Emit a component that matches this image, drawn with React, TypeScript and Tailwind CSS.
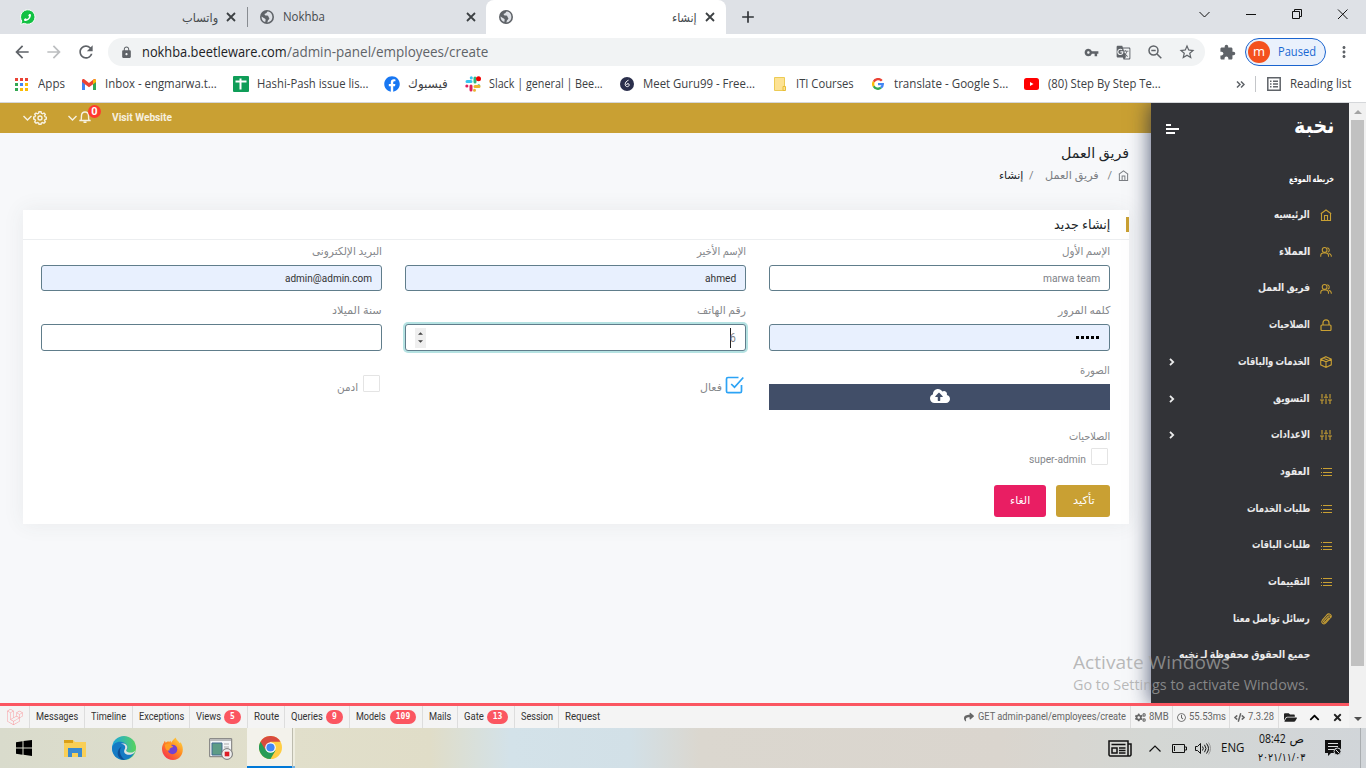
import React, { useLayoutEffect, useRef, useState } from "react";
import {
  MdArrowBack, MdArrowForward, MdRefresh, MdLock, MdVpnKey, MdGTranslate, MdStarBorder,
  MdExtension, MdMoreVert, MdAdd,
} from "react-icons/md";
import {
  FaPhoneAlt, FaFacebook, FaCloudUploadAlt, FaShare, FaCogs, FaRegClock, FaCode,
  FaFolderOpen, FaChevronUp, FaTimes, FaLaravel,
} from "react-icons/fa";

/* One line of text, condensed or stretched to a set width. */
function Fit({ w, rtl, className = "", children }: { w: number; rtl?: boolean; className?: string; children: string }) {
  const ref = useRef<HTMLSpanElement>(null);
  const [scale, setScale] = useState(1);
  useLayoutEffect(() => {
    if (ref.current) setScale(w / ref.current.offsetWidth);
  }, [w, children]);
  return (
    <span dir="ltr" className={`block shrink-0 whitespace-nowrap ${className}`} style={{ width: w }}>
      <span ref={ref} dir={rtl ? "rtl" : "ltr"} className="inline-block origin-left" style={{ transform: `scaleX(${scale})` }}>
        {children}
      </span>
    </span>
  );
}

type P = { className?: string };

const Close = ({ className = "" }: P) => (
  <svg viewBox="0 0 14 14" className={className} fill="none" stroke="#3c4043" strokeWidth="1.800">
    <path d="m3 3 8 8M11 3l-8 8" />
  </svg>
);
const Home = ({ className = "" }: P) => (
  <svg viewBox="0 0 12 12" className={className} fill="none" stroke="currentColor" strokeWidth="1.100">
    <path d="M.8 4.800 6 1l5.200 3.800M1.500 4.500v7h9v-7M4.500 11.500V6.500h3v5" />
  </svg>
);
const Users = ({ className = "" }: P) => (
  <svg viewBox="0 0 13 12" className={className} fill="none" stroke="currentColor" strokeWidth="1.100">
    <circle cx="5" cy="3.800" r="2.600" />
    <path d="M.8 11.200V10c0-1.600 1.200-2.800 2.800-2.800h2.800c1.600 0 2.800 1.200 2.800 2.800v1.200M7.800 1.300a2.600 2.600 0 0 1 .6 5M9.800 7.500c1.600.2 2.500 1.300 2.500 3.700" />
  </svg>
);
const Lock = ({ className = "" }: P) => (
  <svg viewBox="0 0 12 12" className={className} fill="none" stroke="currentColor" strokeWidth="1.200">
    <path d="M2 6h8q1 0 1 1v3.500q0 1-1 1H2q-1 0-1-1V7q0-1 1-1zM3 6V3.800a3 3 0 0 1 6 0V6" />
  </svg>
);
const Box = ({ className = "" }: P) => (
  <svg viewBox="0 0 12 12" className={className} fill="none" stroke="currentColor" strokeWidth="1.100">
    <path d="M6 .7 11.300 3.200v5.600L6 11.400.7 8.800V3.200zM.7 3.200 6 5.800l5.300-2.600M6 5.800v5.600M3.300 2l5.300 2.600" />
  </svg>
);
const Sliders = ({ className = "" }: P) => (
  <svg viewBox="0 0 12 12" className={className} fill="none" stroke="currentColor" strokeWidth="1.100">
    <path d="M2 1v4.500M2 7v4M6 1v3M6 5.500V11M10 1v4.500M10 7v4M0 7h4M4 4.300h4M8 7h4" />
  </svg>
);
const Lines = ({ className = "" }: P) => (
  <svg viewBox="0 0 12 12" className={className} fill="currentColor" shapeRendering="crispEdges">
    <path d="M1 2h1v1H1zM3 2h9v1H3zM1 6h1v1H1zM3 6h9v1H3zM1 9h1v1H1zM3 9h9v1H3z" />
  </svg>
);
const Clip = ({ className = "" }: P) => (
  <svg viewBox="0 0 12 12" className={className} fill="none" stroke="currentColor" strokeWidth="1.100">
    <path d="M9 4.500 5.300 9c-1 1-2.300-.1-1.400-1.200L8 3.300c1.400-1.400 3.200.2 2 1.800L5.800 10c-2 2.200-5.300-.2-3.400-2.800L6.800 2c2.300-2.400 5.400-.1 4.100 2.500" />
  </svg>
);
const Right = ({ className = "" }: P) => (
  <svg viewBox="0 0 6 8" className={className} fill="none" stroke="currentColor" strokeWidth="1.800">
    <path d="m1 .8 3.200 3.200L1 7.200" />
  </svg>
);
const Down = ({ className = "" }: P) => (
  <svg viewBox="0 0 9 6" className={className} fill="none" stroke="currentColor" strokeWidth="1.400">
    <path d="m.5 1 4 4 4-4" />
  </svg>
);
const Gear = ({ className = "" }: P) => (
  <svg viewBox="0 0 14 14" className={className} fill="none" stroke="currentColor" strokeWidth="1.400">
    <path d="M6 .8h2l.4 1.500 1.200.5L11 2l1.300 1.300-.8 1.300.5 1.200 1.300.4v1.900l-1.300.4-.5 1.200.8 1.300L11 12.200l-1.400-.7-1.200.5L8 13.300H6L5.600 12l-1.200-.5-1.400.7L1.700 11l.8-1.300L2 8.500.7 8V6L2 5.700l.5-1.200-.8-1.300L3 2l1.400.8 1.200-.5z" />
    <circle cx="7" cy="7" r="2" />
  </svg>
);
const Bell = ({ className = "" }: P) => (
  <svg viewBox="0 0 12 12" className={className} fill="none" stroke="currentColor" strokeWidth="1.400">
    <path d="M.3 9.500h11.400M2 9.300C2.600 8 2.300 6.500 2.500 4.500 2.700 2.300 4 1 6 1s3.300 1.300 3.500 3.500c.2 2-.1 3.500.5 4.800M4.500 11.300h3" />
  </svg>
);
const Globe = ({ className = "" }: P) => (
  <svg viewBox="0 0 14 14" className={className}>
    <circle cx="7" cy="7" r="7" fill="#5f6368" />
    <path d="M8.200 1.600c-2 .2-1 1.700-2.600 2S4.500 5 5.600 5.500s2.600-.3 2.800 1 1.200 1.200.9 2.300-1.300 1-1.500 2l-.4 1.600c2.800-.1 5-2.300 5-5.300C12.400 4.500 11 2.200 8.200 1.600zM1.600 6.400c-.3 2.900 1.400 5 3.700 5.700-.1-1.400.8-1.900.1-3C4.800 8.300 3 7.500 1.600 6.400z" fill="#dee1e6" />
  </svg>
);

function Tabs() {
  return (
    <div className="flex h-[34px] shrink-0 bg-[#dee1e6] text-xs text-[#45494d]">
      <div className="flex w-[247px] items-center pl-5">
        <svg viewBox="0 0 16 16" className="size-4"><path d="M.7 15.300 1.800 12A7.200 7.200 0 1 1 4.500 14.400z" fill="#12c143" stroke="#fff" /></svg>
        <FaPhoneAlt className="mr-[148px] -ml-[12px] size-[7px] -scale-x-100 text-white" />
        <span className="w-[3px] shrink-0" />
        <Fit w={36} rtl className="mt-px">واتساب</Fit>
        <Close className="ml-[6px] size-[14px]" />
      </div>
      <div className="my-[7px] w-px bg-[#888c91]" />
      <div className="flex w-[238px] items-center pl-3">
        <Globe className="size-[14px]" />
        <Fit w={42} className="ml-[9px]">Nokhba</Fit>
        <Close className="ml-[139px] size-[14px]" />
      </div>
      <div className="flex w-[240px] items-center rounded-t-lg bg-white pl-[13px]">
        <Globe className="size-[14px]" />
        <Fit w={25} rtl className="mt-px ml-[159px]">إنشاء</Fit>
        <Close className="ml-[6px] size-[14px]" />
      </div>
      <MdAdd className="mt-[7px] ml-[12px] size-5 text-[#303438]" />
      <svg viewBox="0 0 150 12" className="mt-[8px] mr-[18px] ml-auto h-[12px] w-[150px]" fill="none" stroke="#111">
        <path d="m1.500 4 5 5 5-5M48 6.500h10M94.500 3.500h7v7h-7zM96.500 3.500v-2h7v7h-2M140 1.500l9.500 9.500M149.500 1.500 140 11" />
      </svg>
    </div>
  );
}

function Toolbar() {
  return (
    <div className="flex h-[36px] shrink-0 items-center bg-white text-[#5f6368]">
      <MdArrowBack className="ml-[12px] size-5" />
      <MdArrowForward className="ml-[12px] size-5 text-[#bcbec0]" />
      <MdRefresh className="ml-[12px] size-[20px]" />
      <div className="ml-[12px] flex h-7 w-[1097px] items-center rounded-full bg-[#f1f3f4] pl-[12px]">
        <MdLock className="mr-[9px] size-[13px]" />
        <Fit w={145} className="text-sm text-[#202124]">nokhba.beetleware.com</Fit>
        <Fit w={201} className="text-sm">/admin-panel/employees/create</Fit>
        <MdVpnKey className="ml-[596px] size-[15px]" />
        <MdGTranslate className="ml-[17px] size-[15px]" />
        <svg viewBox="0 0 14 14" className="ml-[17px] size-[14px]" fill="none" stroke="currentColor" strokeWidth="1.500">
          <circle cx="5.500" cy="5.500" r="4.500" /><path d="m9 9 4.300 4.300M3.300 5.500h4.400" />
        </svg>
        <MdStarBorder className="ml-[16px] size-[18px]" />
      </div>
      <MdExtension className="ml-[14px] size-[17px]" />
      <div className="ml-[9px] flex h-7 w-[81px] items-center rounded-full border border-[#1a64cf] bg-[#eaf1fc] pl-[2px] text-[#1967d2]">
        <span className="flex size-[22px] items-center justify-center rounded-full bg-[#f4511e] pb-0.5 text-[13px] leading-none text-white">m</span>
        <Fit w={38} className="ml-2 text-xs">Paused</Fit>
      </div>
      <MdMoreVert className="ml-[9px] size-[18px]" />
    </div>
  );
}

const appColors = ["bg-[#ea4335]", "bg-[#ea4335]", "bg-[#ea4335]", "bg-[#34a853]", "bg-[#4285f4]", "bg-[#fbbc05]", "bg-[#34a853]", "bg-[#fbbc05]", "bg-[#fbbc05]"];

const bookmarks = [
  { slot: 67, iw: 23, tw: 27, text: "Apps", icon: (
    <div className="grid size-[13px] grid-cols-3 gap-[2px]">{appColors.map((c, i) => <i key={i} className={c} />)}</div>) },
  { slot: 151, iw: 23, tw: 112, text: "Inbox - engmarwa.t...", icon: (
    <svg viewBox="0 0 14 11" className="h-[11px] w-[14px]">
      <path d="M0 1.500V11h3V5z" fill="#4285f4" /><path d="M14 1.500V11h-3V5z" fill="#34a853" />
      <path d="M0 1.500C0 0 1.500-.4 2.600.5L7 4 11.400.5C12.500-.4 14 0 14 1.500V3L7 8.200 0 3z" fill="#ea4335" />
      <path d="M11 1v4.300l3-2.300V1.500C14 0 12.300-.3 11 1z" fill="#fbbc04" />
    </svg>) },
  { slot: 151, iw: 24, tw: 111, text: "Hashi-Pash issue lis...", icon: (
    <svg viewBox="0 0 16 16" className="size-4"><rect width="16" height="16" rx="1" fill="#0f9d58" /><path d="M2.500 5.500h11M7.500 2.500v11" stroke="#fff" strokeWidth="2" /></svg>) },
  { slot: 81, iw: 24, tw: 40, text: "فيسبوك", rtl: true, icon: <FaFacebook className="size-4 text-[#1877f2]" /> },
  { slot: 155, iw: 24, tw: 114, text: "Slack | general | Bee...", icon: (
    <svg viewBox="0 0 16 16" className="size-4" strokeWidth="3" strokeLinecap="round">
      <path d="M2 5.500h4M6.300 1.800v.1" stroke="#36c5f0" /><path d="M10 2v4M13.700 9.700h.1" stroke="#2eb67d" />
      <path d="M10 10.500h4M9.500 14.200v.1" stroke="#ecb22e" /><path d="M6 10v4M1.800 10h.1" stroke="#e01e5a" /><circle cx="13.500" cy="2.800" r="2.500" fill="#f00000" />
    </svg>) },
  { slot: 154, iw: 23, tw: 112, text: "Meet Guru99 - Free...", icon: (
    <svg viewBox="0 0 14 14" className="size-[14px]"><circle cx="7" cy="7" r="7" fill="#2b2f4c" /><path d="M8.500 3.200C6.500 4 5.200 5.500 5.200 7.500c0 2.800 4 2.800 4 .4 0-1.800-2.500-1.700-2.700 0" fill="none" stroke="#fff" /></svg>) },
  { slot: 98, iw: 22, tw: 58, text: "ITI Courses", icon: (
    <svg viewBox="0 0 12 14" className="h-[14px] w-3"><path d="M.5.5h10v13H.5z" fill="#fde293" stroke="#eccb55" /><path d="M9 13.500v-4h2.500v4z" fill="#fde293" stroke="#e8bd36" /></svg>) },
  { slot: 152, iw: 22, tw: 114, text: "translate - Google S...", icon: (
    <svg viewBox="0 0 12 12" className="size-3" fill="none" strokeWidth="2.300">
      <path d="M9.800 2.800A4.850 4.850 0 0 0 1.700 3.800" stroke="#ea4335" /><path d="M1.700 3.800a4.850 4.850 0 0 0 0 4.400" stroke="#fbbc05" />
      <path d="M1.700 8.200a4.850 4.850 0 0 0 7.300 1.500" stroke="#34a853" /><path d="M9 9.700A4.600 4.600 0 0 0 10.800 6.200H6" stroke="#4285f4" />
    </svg>) },
  { slot: 210, iw: 24, tw: 113, text: "(80) Step By Step Te...", icon: (
    <svg viewBox="0 0 15 12" className="h-3 w-[15px]"><rect width="15" height="12" rx="2.500" fill="#f00" /><path d="m6 4 3.500 2L6 8z" fill="#fff" /></svg>) },
];

function Bookmarks() {
  return (
    <div className="flex h-[33px] shrink-0 items-center border-b border-[#d5d7da] bg-white pb-[4px] pl-[15px] text-xs text-[#3c4043]">
      {bookmarks.map((b) => (
        <div key={b.text} className="flex shrink-0 items-center" style={{ width: b.slot }}>
          <span className="shrink-0" style={{ width: b.iw }}>{b.icon}</span>
          <Fit w={b.tw} rtl={b.rtl}>{b.text}</Fit>
        </div>
      ))}
      <svg viewBox="0 0 9 7" className="ml-[2px] h-[7px] w-[9px] shrink-0" fill="none" stroke="#5f6368" strokeWidth="1.500"><path d="m1 .5 3 3-3 3M5 .5l3 3-3 3" /></svg>
      <div className="mr-[11px] ml-[10px] h-4 w-px bg-[#c4c6c9]" />
      <svg viewBox="0 0 14 14" className="mr-[9px] size-[14px] shrink-0" fill="none" stroke="#5f6368" strokeWidth="1.500">
        <path d="M.8.800h12.400v12.400H.800zM3 4.300h1.500M6 4.300h5M3 7h1.500M6 7h5M3 9.700h1.500M6 9.700h5" />
      </svg>
      <Fit w={61}>Reading list</Fit>
    </div>
  );
}

function TopBar() {
  return (
    <div className="flex h-[30px] shrink-0 items-center bg-[#c9a033] pl-[23px] text-white/85">
      <Down className="h-[6px] w-[9px]" />
      <Gear className="mb-px ml-[1px] size-[14px]" />
      <Down className="ml-[21px] h-[6px] w-[9px]" />
      <div className="relative mb-[2px] ml-[2px]">
        <Bell className="size-3" />
        <span className="absolute -top-[6px] left-[9px] flex size-[13px] items-center justify-center rounded-full bg-[#ff3a2f] text-[11px] leading-none font-bold text-white">0</span>
      </div>
      <Fit w={60} className="ml-[21px] text-[11px] font-bold">Visit Website</Fit>
    </div>
  );
}

const Label = ({ w, children }: { w: number; children: string }) => (
  <div className="flex h-[18px] items-center justify-end pt-[2px] text-[#85878b]"><Fit w={w} rtl>{children}</Fit></div>
);

function Field({ label, lw, filled, focus, tall, children }: { label: string; lw: number; filled?: boolean; focus?: boolean; tall?: boolean; children?: React.ReactNode }) {
  return (
    <div className="w-[341px]">
      <Label w={lw}>{label}</Label>
      <div className={`mt-[5px] flex items-center justify-end rounded-[3px] border border-[#607d8b] px-[9px] ${tall ? "h-[27px]" : "h-[26px]"} ${filled ? "bg-[#e8f0fe] text-[#333]" : "bg-white text-[#7d8186]"} ${focus ? "shadow-[0_0_0_2px_#b5e2e2]" : ""}`}>
        {children}
      </div>
    </div>
  );
}

function Card() {
  return (
    <div className="mt-[25px] ml-[23px] h-[314px] w-[1106px] bg-white text-[11px] shadow-[0_0_20px_rgba(60,75,80,0.08)]">
      <div className="flex h-[30px] items-center justify-end border-b border-[#eceef0]">
        <Fit w={56} rtl className="text-[13px] text-[#212529]">إنشاء جديد</Fit>
        <div className="ml-4 h-[15px] w-[3px] bg-[#c9a033]" />
      </div>
      <div className="pr-[19px] pl-[18px]">
        <div className="flex justify-between pt-[2px]">
          <Field label="البريد الإلكترونى" lw={70} filled><Fit w={87} className="pt-px text-[11.5px]">admin@admin.com</Fit></Field>
          <Field label="الإسم الأخير" lw={49} filled><Fit w={31} className="pt-px text-[11.5px]">ahmed</Fit></Field>
          <Field label="الإسم الأول" lw={48}><Fit w={57} className="pt-px text-[11.5px]">marwa team</Fit></Field>
        </div>
        <div className="flex justify-between pt-[10px]">
          <Field label="سنة الميلاد" lw={50} tall />
          <Field label="رقم الهاتف" lw={49} focus tall>
            <div className="mr-auto flex h-5 w-[11px] flex-col items-center justify-center gap-[5px] bg-[#efefef]">
              <svg viewBox="0 0 6 3" className="h-[3px] w-[5px]"><path d="M0 3 3 0l3 3z" fill="#444" /></svg>
              <svg viewBox="0 0 6 3" className="h-[3px] w-[5px]"><path d="m0 0 3 3 3-3z" fill="#444" /></svg>
            </div>
            <div className="-mr-px h-5 w-px bg-[#222]" />
            <Fit w={6} className="text-[12px]">6</Fit>
          </Field>
          <Field label="كلمه المرور" lw={52} filled tall>
            <div className="mr-px flex gap-[2px]">{[0, 1, 2, 3, 4].map((i) => <i key={i} className="size-[3px] bg-black" />)}</div>
          </Field>
        </div>
        <div className="flex justify-between pt-[10px]">
          <div className="flex w-[341px] items-start justify-end pt-[14px] pr-[2px] text-[#85878b]">
            <Fit w={21} rtl className="mt-[5px] mr-[5px]">ادمن</Fit>
            <div className="size-[17px] rounded-[1px] border border-[#e4e4e4]" />
          </div>
          <div className="flex w-[341px] items-start justify-end pt-[14px] pr-[2px] text-[#85878b]">
            <Fit w={22} rtl className="mt-[5px] mr-[3px]">فعال</Fit>
            <svg viewBox="0 0 19 19" className="mt-px size-[19px]" fill="none" stroke="#2ca3f5" strokeWidth="1.700">
              <path d="M13.500 1.500H3Q1.500 1.500 1.500 3v12.200q0 1.500 1.500 1.500h12q1.500 0 1.500-1.500V9" /><path d="m6.200 8 3.300 3.200L18.300 1.500" />
            </svg>
          </div>
          <div className="w-[341px]">
            <Label w={30}>الصورة</Label>
            <div className="mt-[5px] flex h-[26px] items-center justify-center bg-[#414e68] text-white"><FaCloudUploadAlt className="mb-[3px] size-[20px]" /></div>
          </div>
        </div>
        <div className="mt-[17px]"><Label w={41}>الصلاحيات</Label></div>
        <div className="mt-[3px] flex h-[17px] justify-end pr-[2px] text-[#85878b]">
          <Fit w={57} className="mt-[3px] mr-[5px] text-[11.5px]">super-admin</Fit>
          <div className="size-[17px] rounded-[1px] border border-[#e4e4e4]" />
        </div>
        <div className="mt-[20px] flex justify-end gap-[10px] text-white">
          <button className="flex h-8 w-[52px] items-center justify-center rounded-[3px] bg-[#e91e63]"><Fit w={20} rtl>الغاء</Fit></button>
          <button className="flex h-8 w-[54px] items-center justify-center rounded-[3px] bg-[#c9a033]"><Fit w={22} rtl>تأكيد</Fit></button>
        </div>
      </div>
    </div>
  );
}

const menu = [
  { t: "الرئيسيه", w: 36, I: Home },
  { t: "العملاء", w: 31, I: Users },
  { t: "فريق العمل", w: 52, I: Users },
  { t: "الصلاحيات", w: 41, I: Lock },
  { t: "الخدمات والباقات", w: 72, I: Box, sub: true },
  { t: "التسويق", w: 37, I: Sliders, sub: true },
  { t: "الاعدادات", w: 39, I: Sliders, sub: true },
  { t: "العقود", w: 30, I: Lines },
  { t: "طلبات الخدمات", w: 63, I: Lines },
  { t: "طلبات الباقات", w: 58, I: Lines },
  { t: "التقييمات", w: 42, I: Lines },
  { t: "رسائل تواصل معنا", w: 77, I: Clip },
];

function Sidebar() {
  return (
    <div className="z-10 w-[198px] shrink-0 bg-[#323337] text-white shadow-[0_0_20px_rgba(18,30,65,0.75)]">
      <div className="flex h-[46px] items-center justify-between px-[15px]">
        <svg viewBox="0 0 13 10" className="mt-[6px] h-[10px] w-[13px]" fill="#fff"><path d="M0 0h5v2H0zM0 4h13v2H0zM0 8h9v2H0z" /></svg>
        <Fit w={40} rtl className="text-[22px] leading-5 font-bold">نخبة</Fit>
      </div>
      <div className="mt-[21px] mb-[16px] flex h-[20px] items-center justify-end pr-[15px]"><Fit w={45} rtl className="text-[9px] font-bold">خريطه الموقع</Fit></div>
      <div className="-mt-[9px] text-[11px] font-bold text-white/90">
        {menu.map(({ t, w, I, sub }) => (
          <div key={t} className="flex h-[36.7px] items-center justify-end pr-[17px]">
            {sub && <Right className="mr-auto ml-[18px] h-2 w-[6px]" />}
            <Fit w={w} rtl>{t}</Fit>
            <I className="ml-[10px] size-3 text-[#c9a033]" />
          </div>
        ))}
        <div className="flex h-[36.7px] items-center justify-end pr-[39px]"><Fit w={131} rtl>جميع الحقوق محفوظة لـ نخبه</Fit></div>
      </div>
    </div>
  );
}

const debug = [
  { t: "Messages", tw: 42, w: 55 }, { t: "Timeline", tw: 35, w: 48 }, { t: "Exceptions", tw: 45, w: 57 },
  { t: "Views", tw: 25, w: 58, n: "5", nw: 17 }, { t: "Route", tw: 25, w: 37 }, { t: "Queries", tw: 32, w: 65, n: "9", nw: 17 },
  { t: "Models", tw: 30, w: 73, n: "109", nw: 26 }, { t: "Mails", tw: 22, w: 35 }, { t: "Gate", tw: 20, w: 57, n: "13", nw: 21 },
  { t: "Session", tw: 32, w: 44 }, { t: "Request", tw: 35, w: 48 },
];

function DebugBar() {
  return (
    <div className="flex h-[25px] shrink-0 border-t-[3px] border-[#fb5661] bg-[#f4f4f4] text-[10.5px] text-[#333]">
      <div className="flex w-[30px] items-center justify-center border-r border-[#ddd] text-[#f99a9f]"><FaLaravel className="size-4" /></div>
      {debug.map((d) => (
        <div key={d.t} className={`flex items-center pb-px pl-[6px] ${d.t === "Request" ? "" : "border-r border-[#ddd]"}`} style={{ width: d.w }}>
          <Fit w={d.tw}>{d.t}</Fit>
          {d.n && <span className={`flex h-[14px] shrink-0 items-center justify-center rounded-full bg-[#fb5661] font-['DejaVu_Sans_Mono'] text-[8px] font-bold text-white ${d.t === "Models" ? "ml-[4px]" : "ml-[3px]"}`} style={{ width: d.nw }}>{d.n}</span>}
        </div>
      ))}
      <div className="ml-auto flex text-[#666]">
        <div className="flex items-center gap-[4px] border-r border-[#ddd] pr-[4px]"><FaShare className="size-[10px]" /><Fit w={148}>GET admin-panel/employees/create</Fit></div>
        <div className="flex w-[42px] items-center gap-[3px] border-r border-[#ddd] pl-1"><FaCogs className="size-[11px]" /><Fit w={20}>8MB</Fit></div>
        <div className="flex w-[57px] items-center gap-[3px] border-r border-[#ddd] pl-1"><FaRegClock className="size-[9px]" /><Fit w={37}>55.53ms</Fit></div>
        <div className="flex w-[49px] items-center gap-[3px] border-r border-[#ddd] pl-1"><FaCode className="size-[11px]" /><Fit w={26}>7.3.28</Fit></div>
        <div className="flex w-[70px] items-center pl-[5px] text-[#222]">
          <FaFolderOpen className="size-[13px]" /><FaChevronUp className="ml-[12px] size-[11px] text-black" /><FaTimes className="ml-[12px] size-[11px]" />
        </div>
      </div>
    </div>
  );
}

function Taskbar() {
  return (
    <div className="flex h-10 shrink-0 items-center bg-[linear-gradient(90deg,#d9dbcc_0px,#e1dfcb_290px,#e0ddc8_430px,#d3e2e9_510px,#d2e0e7_630px,#dbd7cf_700px,#dad5ce_1000px,#d4d7d4_1150px,#d1d5d9_1366px)] text-[#111]">
      <svg viewBox="0 0 16 16" className="ml-4 size-4"><path d="M0 2.300 6.500 1.300v6.200H0zM7.500 1.100 16 0v7.500H7.500zM0 8.500h6.500v6.200L0 13.700zM7.500 8.500H16V16l-8.500-1.200z" fill="#000" /></svg>
      <svg viewBox="0 0 22 20" className="ml-8 h-[20px] w-[22px]">
        <path d="M0 2h9l2 2h11v15H0z" fill="#f9cf57" /><path d="M0 2h9v3H0z" fill="#dba018" /><path d="M4 19v-9h14v9h-4v-4H8v4z" fill="#3b8ad0" />
      </svg>
      <svg viewBox="0 0 24 24" className="ml-[26px] size-6">
        <defs><linearGradient id="edge" x1="0" x2="1"><stop stopColor="#1ba5df" /><stop offset="1" stopColor="#58d35e" /></linearGradient></defs>
        <circle cx="12" cy="12" r="12" fill="url(#edge)" />
        <path d="M0 12C1 7 6 5 10 6c4 .8 6 3.600 5.500 6.500-.3 1.400-1.500 1.700-1.200 2.800.5 2.200 5.200 2.700 8.200.8C20.500 21 16 24 12 24 5 24 0 19 0 12z" fill="#167bc4" />
        <path d="M24 13c-1 3-4 4-7 3.500-2.500-.5-3.300-1.500-2.500-2.700 1.500-2 1-4.800-1.500-6-1.500-.6-3-.5-4 0C12 8 14 10 13 12.500c-.8 1.800-1.500 3.500 0 5 2.500 2.300 7.500 1.500 9.500-1z" fill="#dfe4df" />
        <path d="M10 10.500C7 13 7 19.500 13 23.900 5 24 3 14 10 10.500z" fill="#0d4f96" />
      </svg>
      <svg viewBox="0 0 24 24" className="ml-[25px] size-[23px]">
        <defs><linearGradient id="fox" x1="1" y1="0" x2=".2" y2="1"><stop stopColor="#ffe34a" /><stop offset=".5" stopColor="#ff8a1f" /><stop offset="1" stopColor="#f6304f" /></linearGradient></defs>
        <path d="M4 4l1 2c1-1.500 3-1.500 4-1l1-1 .5 2C12 4 13 2 15.500.5c.3 3 3 3.500 4 6l1-1C25 12 23 23.500 12.500 24 3 24-2 13 3 6z" fill="url(#fox)" />
        <circle cx="12" cy="13" r="5" fill="#7243d1" /><path d="M4 8c4-2 7-1 7 1 2 0 2 1.500 0 2-2 1-2.500 1.500-2 3C6 15 4 12 4 8z" fill="#ff9d22" />
      </svg>
      <svg viewBox="0 0 24 23" className="ml-[25px] h-[23px] w-6">
        <path d="M.7 1.700h22v18H.7z" fill="#f4f6f7" stroke="#777" /><path d="M1 2h21v2H1z" fill="#bbb" /><path d="M3 6h10v12H3z" fill="#5d9c86" stroke="#406a91" /><path d="M15 7h5M15 10h5M15 13h5" stroke="#aaa" />
        <circle cx="18" cy="17" r="5.400" fill="#eee" stroke="#777" /><path d="M15.700 14.700h4.600v4.600h-4.600z" fill="#dd1d25" />
      </svg>
      <div className="ml-[14px] flex h-10 w-[45px] items-center justify-center border-b-2 border-[#0078d7] bg-[#f3f2eb] pl-[2px]">
        <svg viewBox="0 0 24 24" className="size-[23px]">
          <circle cx="12" cy="12" r="12" fill="#ffcd42" />
          <path d="M12 12 1.600 6A12 12 0 0 0 12 24l5.200-9z" fill="#279c57" /><path d="M1.600 6A12 12 0 0 1 22.400 6H12l-5.500 8z" fill="#d84b3e" />
          <circle cx="12" cy="12" r="5.500" fill="#fff" /><circle cx="12" cy="12" r="4.300" fill="#4286f5" />
        </svg>
      </div>
      <div className="h-10 w-[3px] border-b-2 border-l border-b-[#6fb1e5] border-l-[#bdbcae] bg-[#eeeddf]" />
      <svg viewBox="0 0 24 17" className="-mr-px ml-auto h-[17px] w-6" fill="none" stroke="#111" strokeWidth="1.500">
        <path d="M1 1h19v15H2l-1-1zM20 4h3v11l-1 1h-3M3.500 4.500h14M4 8h5v5H4zM11 8h6.500M11 10.500h6.500M11 13h6.500" />
      </svg>
      <svg viewBox="0 0 12 7" className="ml-[18px] h-[7px] w-3" fill="none" stroke="#111" strokeWidth="1.200"><path d="m.5 6.500 5.500-5.500 5.500 5.500" /></svg>
      <svg viewBox="0 0 15 9" className="ml-[11px] h-[9px] w-[15px]" fill="none" stroke="#111"><path d="M.5.5h12v8H.5zM13 3h1.500v3H13M2.500 2v5" /></svg>
      <svg viewBox="0 0 16 13" className="ml-[8px] h-[13px] w-4" fill="none" stroke="#111"><path d="M.5 4.500h2l3-3v10l-3-3h-2zM7.500 4.500q1.500 2 0 4M9.500 2.800q3 3.700 0 7.400M11.500 1.500q4 5 0 10" /><path d="M13.500.5q4 6 0 12" stroke="#999" /></svg>
      <Fit w={23} className="ml-[10px] text-xs">ENG</Fit>
      <div className="ml-[14px] flex w-[47px] flex-col items-center text-xs leading-[18px]">
        <div className="flex gap-1"><Fit w={27}>08:42</Fit><Fit w={15} rtl>ص</Fit></div>
        <Fit w={47} className="text-[11px]">٢٠٢١/١١/٠٣</Fit>
      </div>
      <svg viewBox="0 0 17 16" className="ml-[20px] h-4 w-[17px]"><path d="M0 0h16v13H6l-3 3v-3H0z" fill="#111" /><path d="M3 3.500h10M3 6.500h10M3 9.500h6" stroke="#ddd" /><circle cx="12.500" cy="11.500" r="3.500" fill="#111" stroke="#d2d6da" /><path d="m10.500 9.500 4 4" stroke="#ddd" /></svg>
      <div className="mr-[5px] ml-[18px] h-10 w-px bg-[#a9adb0]" />
    </div>
  );
}

export default function App() {
  return (
    <div dir="ltr" className="relative flex h-[768px] w-[1366px] flex-col overflow-hidden bg-white font-['Open_Sans','DejaVu_Sans',sans-serif]">
      <Tabs />
      <Toolbar />
      <Bookmarks />
      <div className="flex h-[625px] shrink-0">
        <div className="flex w-[1349px] flex-col font-[Roboto,'DejaVu_Sans',sans-serif]">
          <div className="flex h-[600px] overflow-hidden">
            <div className="w-[1151px] shrink-0 bg-[#f7f8fa]">
              <TopBar />
              <div className="mt-[10px] flex h-[20px] items-center justify-end pr-[22px] text-[14px] text-[#212529]"><Fit w={68} rtl>فريق العمل</Fit></div>
              <div className="mt-[3px] flex h-[19px] items-center justify-end pt-px pr-[22px] text-[11px] text-[#7b7e83]">
                <Fit w={24} rtl className="text-[#212529]">إنشاء</Fit>
                <span className="ml-[6px]">/</span>
                <Fit w={54} rtl className="ml-[12px]">فريق العمل</Fit>
                <span className="mr-[6px] ml-[8px]">/</span>
                <Home className="mb-[2px] size-[11px]" />
              </div>
              <Card />
            </div>
            <Sidebar />
          </div>
          <DebugBar />
        </div>
        <div className="flex w-[17px] flex-col items-center bg-[#f1f1f1]">
          <svg viewBox="0 0 8 4" className="mt-[7px] h-1 w-2"><path d="m0 4 4-4 4 4z" fill="#a3a3a3" /></svg>
          <div className="mt-[6px] h-[546px] w-[13px] bg-[#c1c1c1]" />
          <svg viewBox="0 0 8 4" className="mt-auto mb-[7px] h-1 w-2"><path d="m0 0 4 4 4-4z" fill="#505050" /></svg>
        </div>
      </div>
      <Taskbar />
      <div className="absolute top-[649px] left-[1073px] z-20 text-[#a3a3a3]/75">
        <Fit w={157} className="text-[19px] leading-[26px]">Activate Windows</Fit>
        <Fit w={236} className="pt-px text-[14.5px] leading-[18px]">Go to Settings to activate Windows.</Fit>
      </div>
    </div>
  );
}
